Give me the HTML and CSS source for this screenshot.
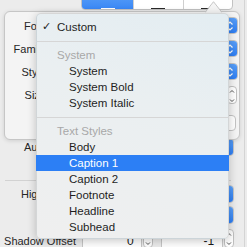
FILE: index.html
```html
<!DOCTYPE html>
<html>
<head>
<meta charset="utf-8">
<link rel="stylesheet" href="styles.css">
</head>
<body>
<div class="inspector">
  <div class="row row-align">
    <span class="label">Alignment</span>
    <div class="segmented">
      <div class="seg seg-on"><span class="seg-line"></span></div>
      <div class="seg"><span class="seg-line"></span></div>
      <div class="seg"><span class="seg-line"></span></div>
    </div>
  </div>
  <div class="row row-autoshrink">
    <span class="label">Autoshrink</span>
    <div class="popup"><span class="cap"><svg width="8" height="12" viewBox="0 0 8 12"><path d="M1.5 4.5 L4 2 L6.5 4.5 M1.5 7.5 L4 10 L6.5 7.5" fill="none" stroke="#fff" stroke-width="1.2"/></svg></span></div>
  </div>
  <div class="sep"></div>
  <div class="row row-high">
    <span class="label">Highlighted</span>
    <div class="popup"><span class="cap"><svg width="8" height="12" viewBox="0 0 8 12"><path d="M1.5 4.5 L4 2 L6.5 4.5 M1.5 7.5 L4 10 L6.5 7.5" fill="none" stroke="#fff" stroke-width="1.2"/></svg></span></div>
  </div>
  <div class="row row-shadow">
    <span class="label">Shadow</span>
    <div class="popup"><span class="cap"><svg width="8" height="12" viewBox="0 0 8 12"><path d="M1.5 4.5 L4 2 L6.5 4.5 M1.5 7.5 L4 10 L6.5 7.5" fill="none" stroke="#fff" stroke-width="1.2"/></svg></span></div>
  </div>
  <div class="row row-offset">
    <span class="label">Shadow Offset</span>
    <div class="field field-a">0</div>
    <div class="stepper"><svg width="8" height="18" viewBox="0 0 8 18"><path d="M2 5.5 L4 3.5 L6 5.5 M2 12.5 L4 14.5 L6 12.5" fill="none" stroke="#555" stroke-width="1"/></svg></div>
    <div class="field field-b">-1</div>
    <div class="stepper"><svg width="8" height="18" viewBox="0 0 8 18"><path d="M2 5.5 L4 3.5 L6 5.5 M2 12.5 L4 14.5 L6 12.5" fill="none" stroke="#555" stroke-width="1"/></svg></div>
  </div>
</div>

<div class="popover">
  <svg class="pop-arrow" width="17" height="12" viewBox="0 0 17 12"><polygon points="0,12 8.5,0.7 17,12" fill="#f4f4f4"/><polyline points="0,11.5 8.5,0.7 17,11.5" fill="none" stroke="#c6c6c6" stroke-width="1"/></svg>
  <div class="prow">
    <span class="plabel">Font</span>
    <div class="popup"><span class="cap"><svg width="8" height="12" viewBox="0 0 8 12"><path d="M1.5 4.5 L4 2 L6.5 4.5 M1.5 7.5 L4 10 L6.5 7.5" fill="none" stroke="#fff" stroke-width="1.2"/></svg></span></div>
  </div>
  <div class="prow">
    <span class="plabel">Family</span>
    <div class="popup"><span class="cap"><svg width="8" height="12" viewBox="0 0 8 12"><path d="M1.5 4.5 L4 2 L6.5 4.5 M1.5 7.5 L4 10 L6.5 7.5" fill="none" stroke="#fff" stroke-width="1.2"/></svg></span></div>
  </div>
  <div class="prow">
    <span class="plabel">Style</span>
    <div class="popup"><span class="cap"><svg width="8" height="12" viewBox="0 0 8 12"><path d="M1.5 4.5 L4 2 L6.5 4.5 M1.5 7.5 L4 10 L6.5 7.5" fill="none" stroke="#fff" stroke-width="1.2"/></svg></span></div>
  </div>
  <div class="prow prow-size">
    <span class="plabel">Size</span>
    <div class="field field-size">17</div>
    <div class="stepper"><svg width="8" height="18" viewBox="0 0 8 18"><path d="M2 5.5 L4 3.5 L6 5.5 M2 12.5 L4 14.5 L6 12.5" fill="none" stroke="#555" stroke-width="1"/></svg></div>
  </div>
  <div class="prow prow-btn">
    <span class="plabel"></span>
    <div class="pbutton">Done</div>
  </div>
</div>

<div class="menu">
  <div class="mitem mcheck"><span class="check">✓</span>Custom</div>
  <div class="msep"></div>
  <div class="mhead">System</div>
  <div class="mitem">System</div>
  <div class="mitem">System Bold</div>
  <div class="mitem">System Italic</div>
  <div class="msep"></div>
  <div class="mhead">Text Styles</div>
  <div class="mitem">Body</div>
  <div class="mitem msel">Caption 1</div>
  <div class="mitem">Caption 2</div>
  <div class="mitem">Footnote</div>
  <div class="mitem">Headline</div>
  <div class="mitem">Subhead</div>
</div>
</body>
</html>
```

FILE: styles.css
```css
* { box-sizing: border-box; }
html, body { margin: 0; padding: 0; }
body {
  width: 247px;
  height: 247px;
  overflow: hidden;
  position: relative;
  background: #ececec;
  font-family: "Liberation Sans", Arial, sans-serif;
  font-size: 11px;
  color: #262626;
}

.inspector {
  width: 245px;
  height: 247px;
  border-right: 1px solid #d4d4d4;
  padding-right: 10px;
  display: flex;
  flex-direction: column;
}

.row {
  display: flex;
  align-items: center;
  height: 18px;
  flex-shrink: 0;
}
.label {
  width: 76px;
  flex-shrink: 0;
  text-align: right;
  margin-right: 6px;
  white-space: nowrap;
}
.row-align { margin-top: -8px; }
.row-align .label { position: relative; top: -8px; margin-right: 5px; }
.row-autoshrink { margin-top: 128px; }
.sep {
  height: 1px;
  background: #d2d2d2;
  margin: 24px 3px 0 5px;
  flex-shrink: 0;
}
.row-high { margin-top: 4px; }
.row-shadow { margin-top: 3px; }
.row-offset { margin-top: 5px; align-items: flex-start; }
.row-offset .label { margin-top: 6px; }

.segmented {
  display: flex;
  height: 18px;
  width: 152px;
  border: 1px solid #c2c2c2;
  border-radius: 4px;
  overflow: hidden;
  background: #fff;
}
.seg {
  width: 50px;
  display: flex;
  justify-content: center;
  border-left: 1px solid #cfcfcf;
}
.seg:first-child { border-left: none; width: 52px; }
.seg-on { background: linear-gradient(#5aa0f8, #3a88f5); }
.seg-line {
  width: 14px;
  height: 1.5px;
  margin-top: 14.5px;
  background: #2a2a2a;
}
.seg-on .seg-line { background: #fff; }

.popup {
  flex: 1;
  height: 18px;
  display: flex;
  justify-content: flex-end;
  background: #fff;
  border: 1px solid #c4c4c4;
  border-radius: 4px;
  overflow: hidden;
}
.cap {
  width: 16px;
  display: flex;
  align-items: center;
  justify-content: center;
  background: linear-gradient(#5ba1f9, #2b7cf3);
  margin: -1px -1px -1px 0;
  height: 18px;
  border-radius: 0 4px 4px 0;
}

.field {
  height: 20px;
  background: #fff;
  border: 1px solid #c6c6c6;
  border-bottom: none;
  text-align: right;
  font-size: 12px;
  line-height: 22px;
  color: #1a1a1a;
}
.field-a { width: 60px; padding-right: 7px; }
.field-b { width: 63px; padding-right: 8px; margin-left: 8px; }
.stepper {
  width: 10px;
  height: 19px;
  margin-left: 1px;
  background: #fff;
  border: 1px solid #c0c0c0;
  border-radius: 4px;
  display: flex;
  justify-content: center;
  overflow: hidden;
}

.popover {
  position: absolute;
  left: 4px;
  top: 11px;
  width: 236px;
  height: 129px;
  background: #f4f4f4;
  border: 1px solid #c6c6c6;
  border-radius: 6px;
  box-shadow: 0 1px 4px rgba(0, 0, 0, 0.12);
  padding: 5px 1.5px 0 0;
  display: flex;
  flex-direction: column;
  gap: 6px;
}
.pop-arrow {
  position: absolute;
  left: 200px;
  top: -11px;
}
.prow {
  display: flex;
  align-items: center;
  height: 17px;
  flex-shrink: 0;
}
.plabel {
  width: 41px;
  text-align: right;
  margin-right: 6px;
  flex-shrink: 0;
  white-space: nowrap;
}
.prow .popup { height: 17px; }
.prow .cap { height: 17px; }
.prow-size { height: 18px; }
.field-size {
  flex: 1;
  height: 18px;
  border-bottom: 1px solid #c6c6c6;
  padding-right: 6px;
  line-height: 16px;
}
.prow-size .stepper { height: 18px; margin-left: 2px; margin-right: 1px; }
.prow-btn { margin-top: 5px; height: 16px; }
.pbutton {
  flex: 1;
  height: 16px;
  margin-right: 2px;
  background: #fff;
  border: 1px solid #c4c4c4;
  border-radius: 4px;
  text-align: center;
  line-height: 14px;
}

.menu {
  position: absolute;
  left: 36px;
  top: 13px;
  width: 193px;
  padding: 5px 0 3px;
  border-radius: 5px;
  border: 1px solid rgba(0, 0, 0, 0.1);
  background: linear-gradient(200deg, #e3edf2 0%, #eaeff1 40%, #efefef 100%);
  box-shadow: 0 2px 10px rgba(0, 0, 0, 0.22);
  font-size: 11.5px;
  color: #1e1e1e;
}
.mitem, .mhead {
  height: 16px;
  line-height: 16px;
  padding-left: 32px;
  white-space: nowrap;
}
.mhead {
  padding-left: 20px;
  color: #a8a8a8;
}
.mcheck {
  padding-left: 0;
  display: flex;
}
.check {
  width: 20px;
  padding-left: 5px;
  font-family: "DejaVu Sans", sans-serif;
  font-size: 11px;
  font-weight: bold;
  color: #222;
}
.msel {
  background: #2c7ff5;
  color: #fff;
  margin: 0 -1px;
  padding-left: 33px;
}
.msep {
  height: 1px;
  background: #d6d6d6;
  margin: 6px 0 5px;
}
```
